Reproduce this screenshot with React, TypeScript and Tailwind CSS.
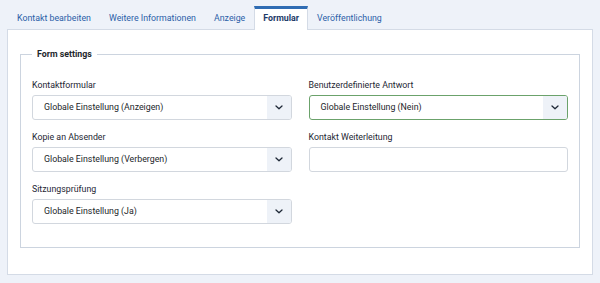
import React from "react";

const tabs = [
  { label: "Kontakt bearbeiten" },
  { label: "Weitere Informationen" },
  { label: "Anzeige" },
  { label: "Formular", active: true },
  { label: "Veröffentlichung" }
];

function Chevron() {
  return (
    <svg width="8" height="5" viewBox="0 0 8 5" fill="none">
      <path d="M1 1l3 2.8L7 1" stroke="#1f2937" strokeWidth="1.3" strokeLinecap="round" strokeLinejoin="round" />
    </svg>
  );
}

function SelectBox({ value, focused }: { value: string; focused?: boolean }) {
  return (
    <div
      className={
        "flex h-[25px] overflow-hidden rounded-[3px] border bg-white " +
        (focused ? "border-[#6ba26b]" : "border-[#d2d7de]")
      }
    >
      <div className="flex flex-1 items-center pl-[11px] text-[#22262a]">{value}</div>
      <div className="flex w-[24px] items-center justify-center bg-[#eef2f8]">
        <Chevron />
      </div>
    </div>
  );
}

function Field({ label, children }: { label: string; children: React.ReactNode }) {
  return (
    <div>
      <div className="mb-[3px] leading-[14px] text-[#1e2633]">{label}</div>
      {children}
    </div>
  );
}

export default function App() {
  return (
    <div className="h-[283px] w-full bg-[#eef2f9] px-[7px] pt-[6px] font-['Roboto',sans-serif] text-[8.8px]">
      <div className="flex pl-px">
        {tabs.map((tab) => (
          <div
            key={tab.label}
            className={
              "relative -mb-px flex h-[24px] items-center border-x border-t-[3px] px-[8px] pb-[2px] " +
              (tab.active
                ? "z-10 border-x-[#d4dbe6] border-t-[#2f6cb3] bg-white font-bold text-[#1c3a68]"
                : "border-transparent text-[#2b5ea8]")
            }
          >
            {tab.label}
          </div>
        ))}
      </div>

      <div className="h-[246px] border border-[#d4dbe6] bg-white px-[12px] pt-[17px]">
        <fieldset className="border border-[#ccd4df] px-[11px] pt-[17px] pb-[23px]">
          <legend className="px-[5px] leading-[14px] font-bold text-[#22262a]">Form settings</legend>
          <div className="grid grid-cols-2 gap-x-[17px] gap-y-[10px]">
            <Field label="Kontaktformular">
              <SelectBox value="Globale Einstellung (Anzeigen)" />
            </Field>
            <Field label="Benutzerdefinierte Antwort">
              <SelectBox value="Globale Einstellung (Nein)" focused />
            </Field>
            <Field label="Kopie an Absender">
              <SelectBox value="Globale Einstellung (Verbergen)" />
            </Field>
            <Field label="Kontakt Weiterleitung">
              <div className="h-[25px] rounded-[3px] border border-[#d2d7de] bg-white" />
            </Field>
            <Field label="Sitzungsprüfung">
              <SelectBox value="Globale Einstellung (Ja)" />
            </Field>
          </div>
        </fieldset>
      </div>
    </div>
  );
}
